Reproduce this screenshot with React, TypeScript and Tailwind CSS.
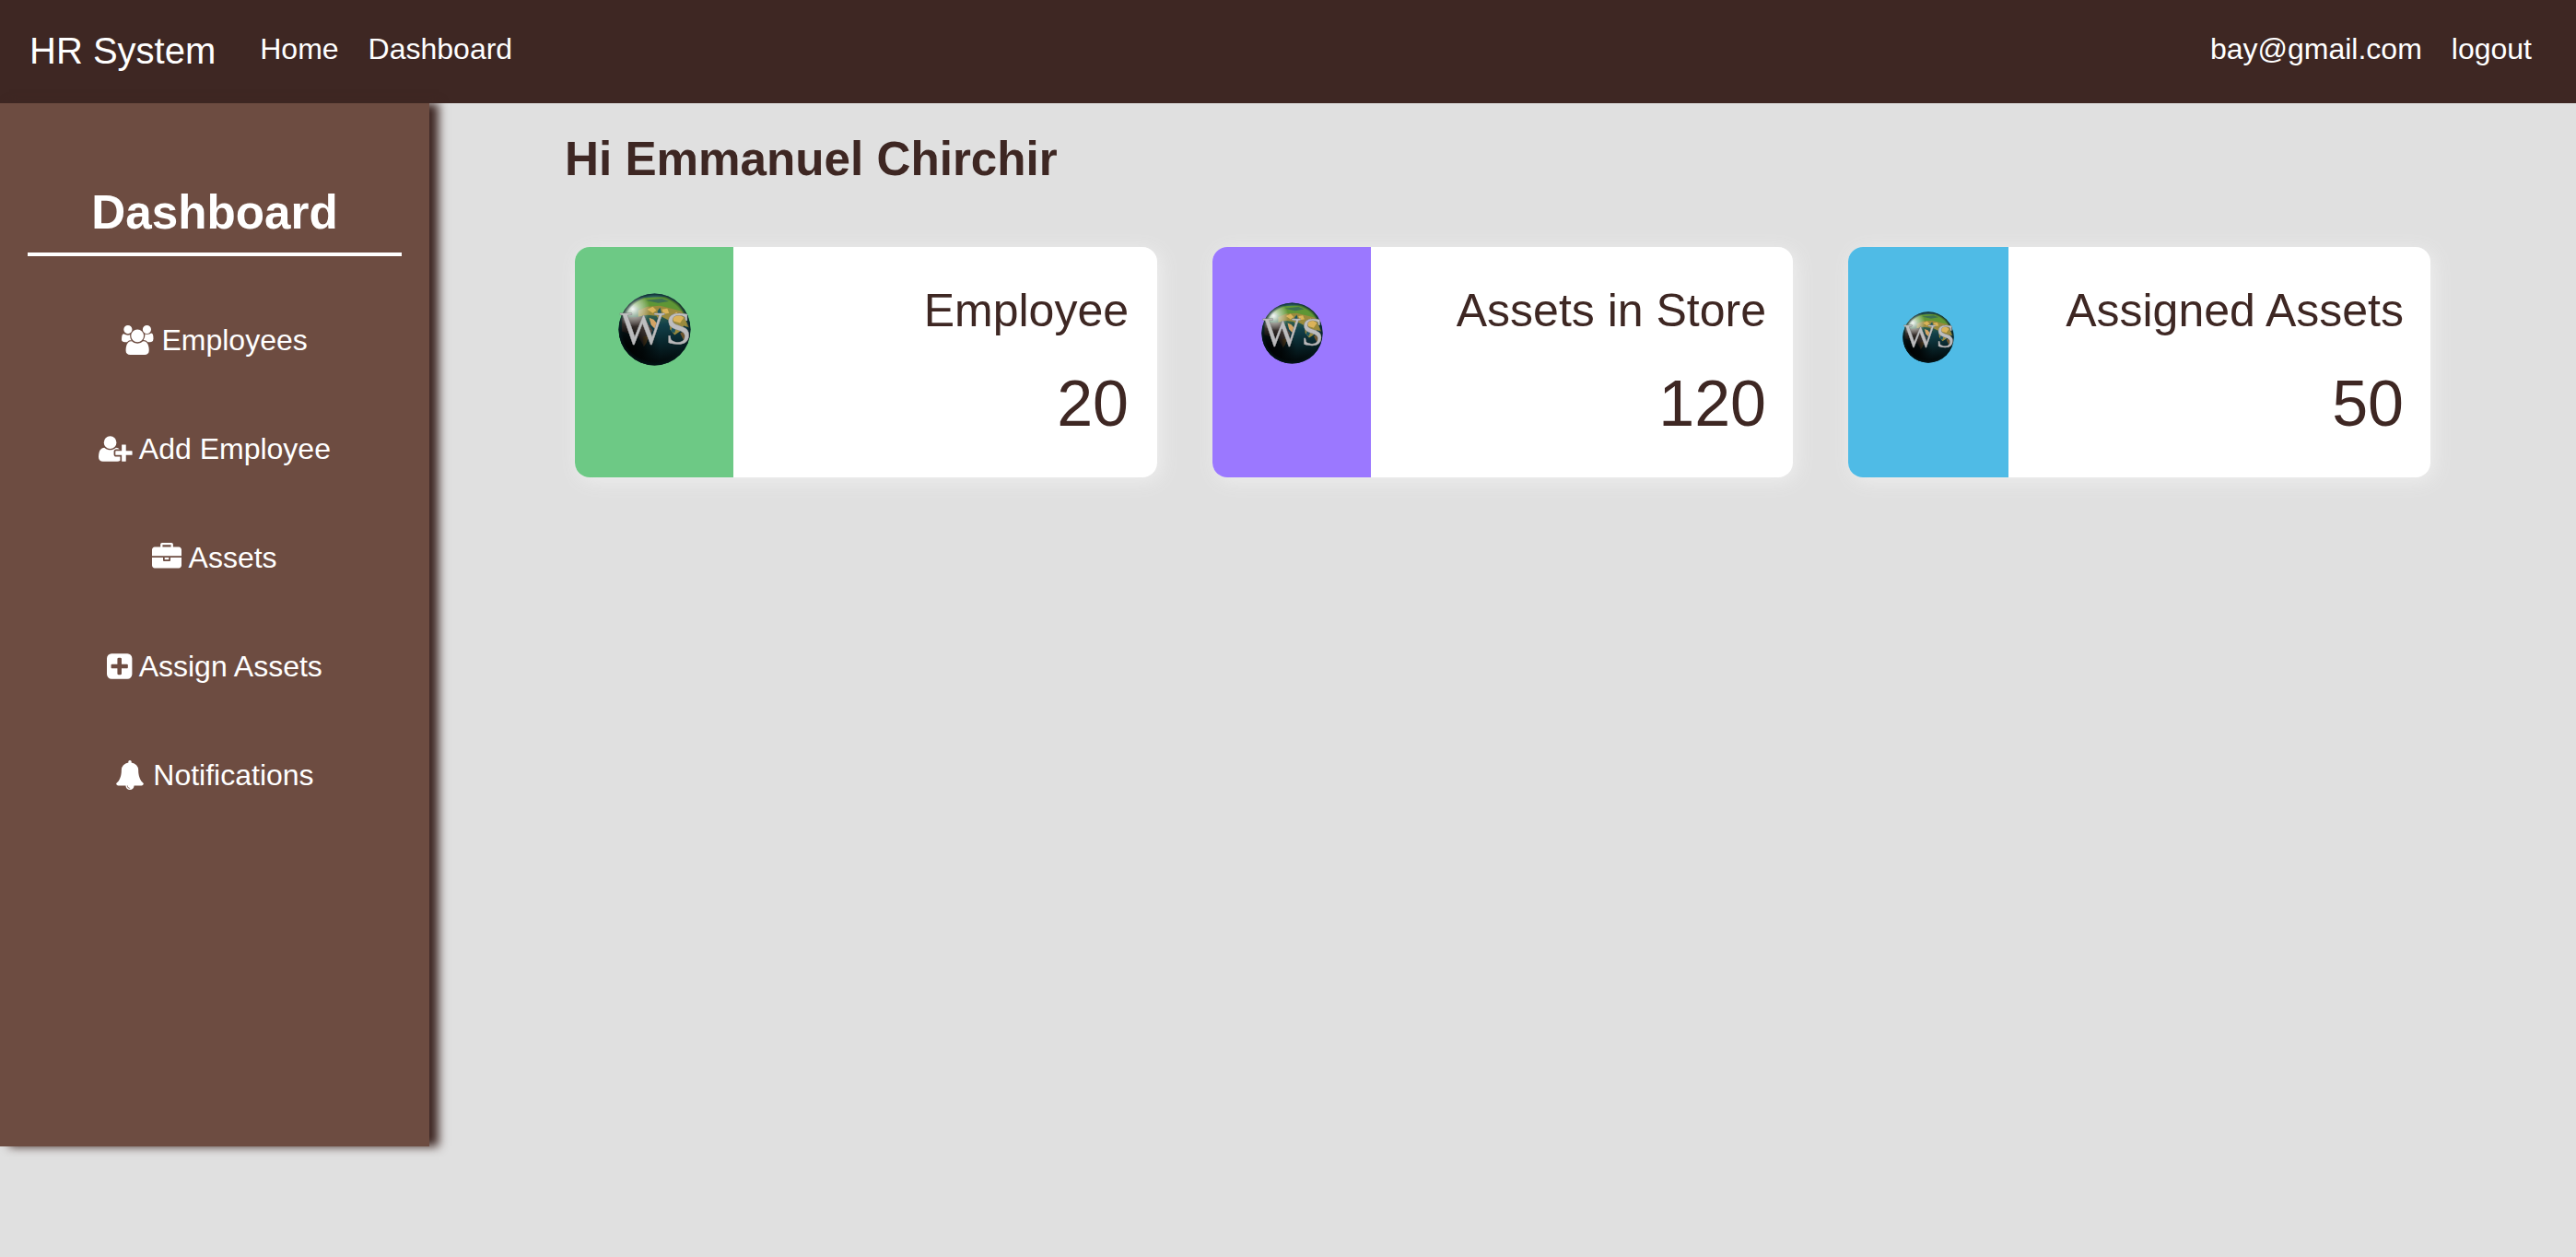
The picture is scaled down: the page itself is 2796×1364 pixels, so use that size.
const USERS =
  'M657 896q-162 5-265 128h-134q-82 0-138-40.5t-56-118.5q0-353 124-353 6 0 43.5 21t97.5 42.5 119 21.5q67 0 133-23-5 37-5 66 0 159 93 293zm1071 637q0 120-73 189.5t-194 69.5h-874q-121 0-194-69.5t-73-189.5q0-53 3.5-103.5t14-109 26.5-108.5 43-97.5 62-81 85.5-53.5 111.5-20q10 0 43 21.5t73 48 107 48 135 21.5 135-21.5 107-48 73-48 43-21.5q61 0 111.5 20t85.5 53.5 62 81 43 97.5 26.5 108.5 14 109 3.5 103.5zm-1024-1277q0 106-75 181t-181 75-181-75-75-181 75-181 181-75 181 75 75 181zm704 384q0 159-112.5 271.5t-271.5 112.5-271.5-112.5-112.5-271.5 112.5-271.5 271.5-112.5 271.5 112.5 112.5 271.5zm576 225q0 78-56 118.5t-138 40.5h-134q-103-123-265-128 93-134 93-293 0-29-5-66 66 23 133 23 59 0 119-21.5t97.5-42.5 43.5-21q124 0 124 353zm-128-609q0 106-75 181t-181 75-181-75-75-181 75-181 181-75 181 75 75 181z';
const USER_PLUS =
  'M704 896q-159 0-271.5-112.5t-112.5-271.5 112.5-271.5 271.5-112.5 271.5 112.5 112.5 271.5-112.5 271.5-271.5 112.5zm960 128h352q13 0 22.5 9.5t9.5 22.5v192q0 13-9.5 22.5t-22.5 9.5h-352v352q0 13-9.5 22.5t-22.5 9.5h-192q-13 0-22.5-9.5t-9.5-22.5v-352h-352q-13 0-22.5-9.5t-9.5-22.5v-192q0-13 9.5-22.5t22.5-9.5h352v-352q0-13 9.5-22.5t22.5-9.5h192q13 0 22.5 9.5t9.5 22.5v352zm-736 224q0 52 38 90t90 38h256v238q-68 50-171 50h-874q-121 0-194-69t-73-190q0-53 3.5-103.5t14-109 26.5-108.5 43-97.5 62-81 85.5-53.5 111.5-20q19 0 39 17 79 61 154.5 91.5t164.5 30.5 164.5-30.5 154.5-91.5q20-17 39-17 132 0 217 96h-223q-52 0-90 38t-38 90v192z';
const BRIEFCASE =
  'M640 256h512v-128h-512v128zm1152 640v480q0 66-47 113t-113 47h-1472q-66 0-113-47t-47-113v-480h672v160q0 26 19 45t45 19h320q26 0 45-19t19-45v-160h672zm-768 0v128h-256v-128h256zm768-480v384h-1792v-384q0-66 47-113t113-47h352v-160q0-40 28-68t68-28h576q40 0 68 28t28 68v160h352q66 0 113 47t47 113z';
const PLUS_SQUARE =
  'M1408 960v-128q0-26-19-45t-45-19h-320v-320q0-26-19-45t-45-19h-128q-26 0-45 19t-19 45v320h-320q-26 0-45 19t-19 45v128q0 26 19 45t45 19h320v320q0 26 19 45t45 19h128q26 0 45-19t19-45v-320h320q26 0 45-19t19-45zm256-544v960q0 119-84.5 203.5t-203.5 84.5h-960q-119 0-203.5-84.5t-84.5-203.5v-960q0-119 84.5-203.5t203.5-84.5h960q119 0 203.5 84.5t84.5 203.5z';
const BELL =
  'M912 1696q0-16-16-16-59 0-101.5-42.5t-42.5-101.5q0-16-16-16t-16 16q0 73 51.5 124.5t124.5 51.5q16 0 16-16zm816-288q0 52-38 90t-90 38h-448q0 106-75 181t-181 75-181-75-75-181h-448q-52 0-90-38t-38-90q50-42 91-88t85-119.5 74.5-158.5 50-206 19.5-260q0-152 117-282.5t307-158.5q-8-19-8-39 0-40 28-68t68-28 68 28 28 68q0 20-8 39 190 28 307 158.5t117 282.5q0 139 19.5 260t50 206 74.5 158.5 85 119.5 91 88z';

const menu = [
  { label: 'Employees', path: USERS, viewBox: '64 0 1920 1792', width: 'w-[34.3px]' },
  { label: 'Add Employee', path: USER_PLUS, viewBox: '0 0 2048 1792', width: 'w-[36.6px]' },
  { label: 'Assets', path: BRIEFCASE, viewBox: '0 0 1792 1792', width: 'w-8' },
  { label: 'Assign Assets', path: PLUS_SQUARE, viewBox: '128 0 1536 1792', width: 'w-[27.4px]' },
  { label: 'Notifications', path: BELL, viewBox: '0 0 1792 1792', width: 'w-8' },
];

const cards = [
  { title: 'Employee', value: 20, side: 'w-[172px] bg-[#6dc985]', body: 'pr-[31px]', logo: 'mt-[50px] size-[79px]' },
  { title: 'Assets in Store', value: 120, side: 'w-[172px] bg-[#9b78ff]', body: 'pr-[29px]', logo: 'mt-[60px] size-[67px]' },
  { title: 'Assigned Assets', value: 50, side: 'w-[174px] bg-[#4fbbe6]', body: 'pr-[29px]', logo: 'mt-[70px] size-[56px]' },
];

function Globe({ id, className }: { id: string; className: string }) {
  return (
    <svg viewBox="0 0 80 80" className={`overflow-visible ${className}`}>
      <defs>
        <clipPath id={`${id}-clip`}>
          <circle cx="40" cy="40" r="39.5" />
        </clipPath>
        <linearGradient id={`${id}-sea`} x1="0.4" y1="0" x2="0.5" y2="1">
          <stop offset="0" stopColor="#2d6a78" />
          <stop offset="0.2" stopColor="#4d7c50" />
          <stop offset="0.45" stopColor="#12404a" />
          <stop offset="0.7" stopColor="#08252b" />
          <stop offset="1" stopColor="#010506" />
        </linearGradient>
        <radialGradient id={`${id}-shine`} cx="0.2" cy="0.22" r="0.24">
          <stop offset="0" stopColor="#ffffff" stopOpacity="0.95" />
          <stop offset="0.4" stopColor="#e6efe6" stopOpacity="0.6" />
          <stop offset="1" stopColor="#ffffff" stopOpacity="0" />
        </radialGradient>
        <radialGradient id={`${id}-dark`} cx="0.1" cy="0.78" r="0.48">
          <stop offset="0" stopColor="#000000" />
          <stop offset="0.5" stopColor="#000000" stopOpacity="0.75" />
          <stop offset="1" stopColor="#000000" stopOpacity="0" />
        </radialGradient>
        <radialGradient id={`${id}-rim`} cx="0.5" cy="0.5" r="0.5">
          <stop offset="0.88" stopColor="#03181c" stopOpacity="0" />
          <stop offset="1" stopColor="#03181c" stopOpacity="0.9" />
        </radialGradient>
        <linearGradient id={`${id}-steel`} x1="0" y1="0" x2="0" y2="1">
          <stop offset="0" stopColor="#c4c4c4" />
          <stop offset="1" stopColor="#b5b5b8" />
        </linearGradient>
        <filter id={`${id}-soft`}>
          <feGaussianBlur stdDeviation="0.7" />
        </filter>
      </defs>
      <g clipPath={`url(#${id}-clip)`}>
        <rect width="80" height="80" fill={`url(#${id}-sea)`} />
        <g filter={`url(#${id}-soft)`}>
          <path d="M14 12 L28 5 L52 4 L66 12 L74 24 L56 17 L40 16 L24 18 Z" fill="#5f9636" />
          <path d="M30 8 L48 6 L56 9 L44 11 Z" fill="#3d6f52" />
          <path d="M22 19 L32 15 L46 14 L58 17 L70 20 L78 38 L72 36 L68 42 L62 46 L57 40 L56 30 L48 26 L44 28 L42 25 L32 24 L22 26 Z" fill="#9a8a3c" />
          <path d="M32 18 L38 15 L42 19 L38 22 Z M48 18 L54 17 L56 22 L50 23 Z M58 25 L64 21 L72 27 L68 33 L61 31 Z" fill="#dbb35a" />
          <path d="M34 27 L39 29 L44 35 L40 39 L36 35 Z" fill="#d3a465" />
          <path d="M43 20 L46 16 L48 24 L45 26 Z M60 34 L64 36 L62 44 L58 42 Z" fill="#1f5560" />
          <path d="M4 27 L28 26 L35 37 L38 41 L33 50 L28 58 L22 48 L4 42 Z" fill="#584c46" />
          <path d="M27 48 L34 46 L31 55 L28 59 Z M68 44 L75 40 L78 48 L72 52 Z" fill="#6d552f" />
        </g>
        <rect width="80" height="80" fill={`url(#${id}-dark)`} />
        <circle cx="40" cy="40" r="40" fill={`url(#${id}-shine)`} />
        <circle cx="40" cy="40" r="40" fill={`url(#${id}-rim)`} />
      </g>
      <g
        className="drop-shadow-[0.6px_0.6px_0.5px_rgba(30,30,30,0.6)]"
        fontFamily="Liberation Serif, serif"
        fontSize="52"
        fill={`url(#${id}-steel)`}
        stroke="#a8a8a8"
        strokeWidth="0.4"
      >
        <text x="2" y="55.7">W</text>
        <text x="52" y="55.7">S</text>
      </g>
    </svg>
  );
}

export default function App() {
  return (
    <div className="flex h-[1364px] w-full flex-col bg-[#e0e0e0] font-['Liberation_Sans',Arial,sans-serif] text-[32px] leading-[48px] text-[#3e2723]">
      <nav className="flex h-28 shrink-0 items-start bg-[#3e2723] pr-12 pl-8 text-white">
        <a className="mt-[25px] mr-12 text-[40px] leading-[60px]">HR System</a>
        <div className="mt-[29px] flex flex-1 gap-8">
          <a>Home</a>
          <a>Dashboard</a>
        </div>
        <div className="mt-[29px] flex gap-8">
          <a>bay@gmail.com</a>
          <a>logout</a>
        </div>
      </nav>

      <div className="flex items-start">
        <aside className="h-[1132px] w-[466px] shrink-0 bg-[#6d4c41] px-[30px] pt-[88px] text-center text-white shadow-[10px_0_10px_#3e2723]">
          <h2 className="h-[78px] border-b-4 border-white text-[51.2px] leading-[61.4px] font-bold">Dashboard</h2>
          <ul className="mt-[67px] flex flex-col gap-[70px]">
            {menu.map((item) => (
              <li key={item.label} className="h-12 whitespace-nowrap">
                <svg viewBox={item.viewBox} className={`inline-block h-8 align-[-4.6px] ${item.width}`} fill="currentColor">
                  <path d={item.path} />
                </svg>{' '}
                {item.label}
              </li>
            ))}
          </ul>
        </aside>

        <main className="flex-1 pt-[30px] pr-[158px] pl-[147px]">
          <h1 className="h-[126px] text-[51.2px] leading-[61.4px] font-bold">Hi Emmanuel Chirchir</h1>
          <div className="ml-[11px] grid grid-cols-[632px_630px_632px] gap-[60px]">
            {cards.map((card, i) => (
              <section key={card.title} className="flex h-[250px] overflow-hidden rounded-2xl bg-white shadow-[4px_4px_20px_#eeeeee]">
                <div className={`flex shrink-0 items-start justify-center ${card.side}`}>
                  <Globe id={`globe-${i}`} className={card.logo} />
                </div>
                <div className={`flex flex-1 flex-col gap-[11px] pt-8 text-right whitespace-nowrap ${card.body}`}>
                  <p className="text-[50px] leading-[75px]">{card.title}</p>
                  <p className="text-[70px] leading-[105px]">{card.value}</p>
                </div>
              </section>
            ))}
          </div>
        </main>
      </div>
    </div>
  );
}
